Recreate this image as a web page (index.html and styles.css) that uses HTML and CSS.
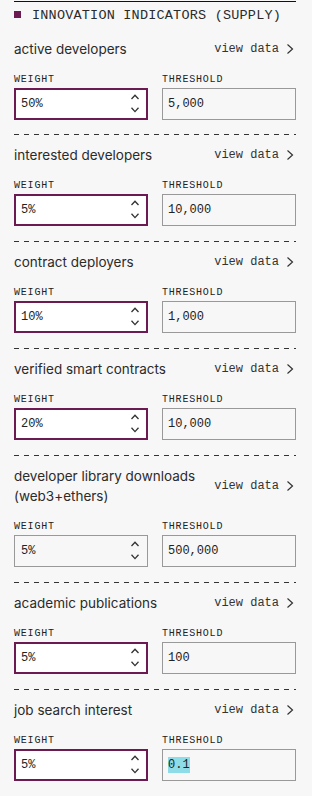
FILE: index.html
```html
<!DOCTYPE html>
<html>
	<head>
		<meta charset="utf-8">
		<link rel="stylesheet" href="styles.css">
	</head>

	<body>
		<section class="panel">
			<h2 class="panel-title"><span class="swatch"></span>INNOVATION INDICATORS (SUPPLY)</h2>

			<ul class="indicators">
				<li class="indicator">
					<div class="indicator-head">
						<span class="indicator-name">active developers</span>
						<a class="view-data">view data <svg width="10" height="10" viewBox="0 0 10 10"><path d="M1.5 0.5 L6.5 5 L1.5 9.5"/></svg></a>
					</div>
					<div class="fields">
						<div class="field">
							<span class="field-label">WEIGHT</span>
							<div class="box box-weight is-set">50%<svg class="spin" width="8" height="28" viewBox="0 0 8 28"><path d="M0.5 9 L4 5.2 L7.5 9 M0.5 17.8 L4 21.6 L7.5 17.8"/></svg></div>
						</div>
						<div class="field">
							<span class="field-label">THRESHOLD</span>
							<div class="box">5,000</div>
						</div>
					</div>
				</li>

				<li class="indicator">
					<div class="indicator-head">
						<span class="indicator-name">interested developers</span>
						<a class="view-data">view data <svg width="10" height="10" viewBox="0 0 10 10"><path d="M1.5 0.5 L6.5 5 L1.5 9.5"/></svg></a>
					</div>
					<div class="fields">
						<div class="field">
							<span class="field-label">WEIGHT</span>
							<div class="box box-weight is-set">5%<svg class="spin" width="8" height="28" viewBox="0 0 8 28"><path d="M0.5 9 L4 5.2 L7.5 9 M0.5 17.8 L4 21.6 L7.5 17.8"/></svg></div>
						</div>
						<div class="field">
							<span class="field-label">THRESHOLD</span>
							<div class="box">10,000</div>
						</div>
					</div>
				</li>

				<li class="indicator">
					<div class="indicator-head">
						<span class="indicator-name">contract deployers</span>
						<a class="view-data">view data <svg width="10" height="10" viewBox="0 0 10 10"><path d="M1.5 0.5 L6.5 5 L1.5 9.5"/></svg></a>
					</div>
					<div class="fields">
						<div class="field">
							<span class="field-label">WEIGHT</span>
							<div class="box box-weight is-set">10%<svg class="spin" width="8" height="28" viewBox="0 0 8 28"><path d="M0.5 9 L4 5.2 L7.5 9 M0.5 17.8 L4 21.6 L7.5 17.8"/></svg></div>
						</div>
						<div class="field">
							<span class="field-label">THRESHOLD</span>
							<div class="box">1,000</div>
						</div>
					</div>
				</li>

				<li class="indicator">
					<div class="indicator-head">
						<span class="indicator-name">verified smart contracts</span>
						<a class="view-data">view data <svg width="10" height="10" viewBox="0 0 10 10"><path d="M1.5 0.5 L6.5 5 L1.5 9.5"/></svg></a>
					</div>
					<div class="fields">
						<div class="field">
							<span class="field-label">WEIGHT</span>
							<div class="box box-weight is-set">20%<svg class="spin" width="8" height="28" viewBox="0 0 8 28"><path d="M0.5 9 L4 5.2 L7.5 9 M0.5 17.8 L4 21.6 L7.5 17.8"/></svg></div>
						</div>
						<div class="field">
							<span class="field-label">THRESHOLD</span>
							<div class="box">10,000</div>
						</div>
					</div>
				</li>

				<li class="indicator">
					<div class="indicator-head">
						<span class="indicator-name">developer library downloads (web3+ethers)</span>
						<a class="view-data">view data <svg width="10" height="10" viewBox="0 0 10 10"><path d="M1.5 0.5 L6.5 5 L1.5 9.5"/></svg></a>
					</div>
					<div class="fields">
						<div class="field">
							<span class="field-label">WEIGHT</span>
							<div class="box box-weight">5%<svg class="spin" width="8" height="28" viewBox="0 0 8 28"><path d="M0.5 9 L4 5.2 L7.5 9 M0.5 17.8 L4 21.6 L7.5 17.8"/></svg></div>
						</div>
						<div class="field">
							<span class="field-label">THRESHOLD</span>
							<div class="box">500,000</div>
						</div>
					</div>
				</li>

				<li class="indicator">
					<div class="indicator-head">
						<span class="indicator-name">academic publications</span>
						<a class="view-data">view data <svg width="10" height="10" viewBox="0 0 10 10"><path d="M1.5 0.5 L6.5 5 L1.5 9.5"/></svg></a>
					</div>
					<div class="fields">
						<div class="field">
							<span class="field-label">WEIGHT</span>
							<div class="box box-weight is-set">5%<svg class="spin" width="8" height="28" viewBox="0 0 8 28"><path d="M0.5 9 L4 5.2 L7.5 9 M0.5 17.8 L4 21.6 L7.5 17.8"/></svg></div>
						</div>
						<div class="field">
							<span class="field-label">THRESHOLD</span>
							<div class="box">100</div>
						</div>
					</div>
				</li>

				<li class="indicator">
					<div class="indicator-head">
						<span class="indicator-name">job search interest</span>
						<a class="view-data">view data <svg width="10" height="10" viewBox="0 0 10 10"><path d="M1.5 0.5 L6.5 5 L1.5 9.5"/></svg></a>
					</div>
					<div class="fields">
						<div class="field">
							<span class="field-label">WEIGHT</span>
							<div class="box box-weight is-set">5%<svg class="spin" width="8" height="28" viewBox="0 0 8 28"><path d="M0.5 9 L4 5.2 L7.5 9 M0.5 17.8 L4 21.6 L7.5 17.8"/></svg></div>
						</div>
						<div class="field">
							<span class="field-label">THRESHOLD</span>
							<div class="box"><span class="selected">0.1</span></div>
						</div>
					</div>
				</li>
			</ul>
		</section>
	</body>
</html>
```

FILE: styles.css
```css
:root {
	box-sizing: border-box;
	--plum: #6b1a52;
	--ink: #2b2b2b;
}

*, *::before, *::after {
	box-sizing: inherit;
}

body {
	margin: 0;
	background-color: #f7f7f7;
	color: var(--ink);
	font-family: "Inter", "Noto Sans", sans-serif;
}

.panel {
	margin: 1px 16px 0 14px;
	border-top: 1px solid #111;
}

.panel-title {
	display: flex;
	gap: 11px;

	margin: 0 0 6px;
	padding-top: 6px;

	font-family: "Liberation Mono", monospace;
	font-size: 13.5px;
	line-height: 16px;
	font-weight: normal;
	letter-spacing: 0.2px;
	color: #2b2b2b;

	& > .swatch {
		flex: none;
		width: 7px;
		height: 7px;
		margin-top: 3px;
		background-color: var(--plum);
	}
}

.indicators {
	list-style: none;
	margin: 0;
	padding: 0;
}

.indicator {
	padding: 9px 0 14px;

	& + .indicator {
		padding-top: 11px;
		padding-bottom: 15px;
		background-image: repeating-linear-gradient(90deg, #333 0 5px, transparent 5px 10px);
		background-size: 100% 1px;
		background-repeat: no-repeat;
	}
}

.indicator-head {
	display: flex;
	justify-content: space-between;
	align-items: center;
	gap: 16px;
}

.indicator-name {
	font-size: 13.5px;
	line-height: 20px;
}

.view-data {
	flex: none;
	display: flex;
	align-items: center;
	gap: 7px;

	font-family: "Liberation Mono", monospace;
	font-size: 12px;
	line-height: 20px;
	color: #333;

	& svg {
		fill: none;
		stroke: #333;
		stroke-width: 1.2;
	}
}

.fields {
	display: grid;
	grid-template-columns: 1fr 1fr;
	gap: 14px;
	margin-top: 15px;
}

.field-label {
	display: block;
	margin-bottom: 2px;

	font-family: "Liberation Mono", monospace;
	font-size: 10px;
	line-height: 12px;
	letter-spacing: 0.8px;
	color: #222;
}

.box {
	display: flex;
	align-items: center;
	justify-content: space-between;
	height: 32px;
	padding: 0 7px 0 5px;

	border: 1px solid #999;

	font-family: "Liberation Mono", monospace;
	font-size: 12px;
	color: #222;

	& .spin {
		fill: none;
		stroke: #333;
		stroke-width: 1.3;
	}
}

.box-weight {
	padding-left: 6px;
	padding-right: 8px;

	&.is-set {
		padding-left: 5px;
		padding-right: 7px;
		border: 2px solid var(--plum);
		background-color: #fff;
	}
}

.selected {
	background-color: #8edce7;
	line-height: 16px;
}
```
